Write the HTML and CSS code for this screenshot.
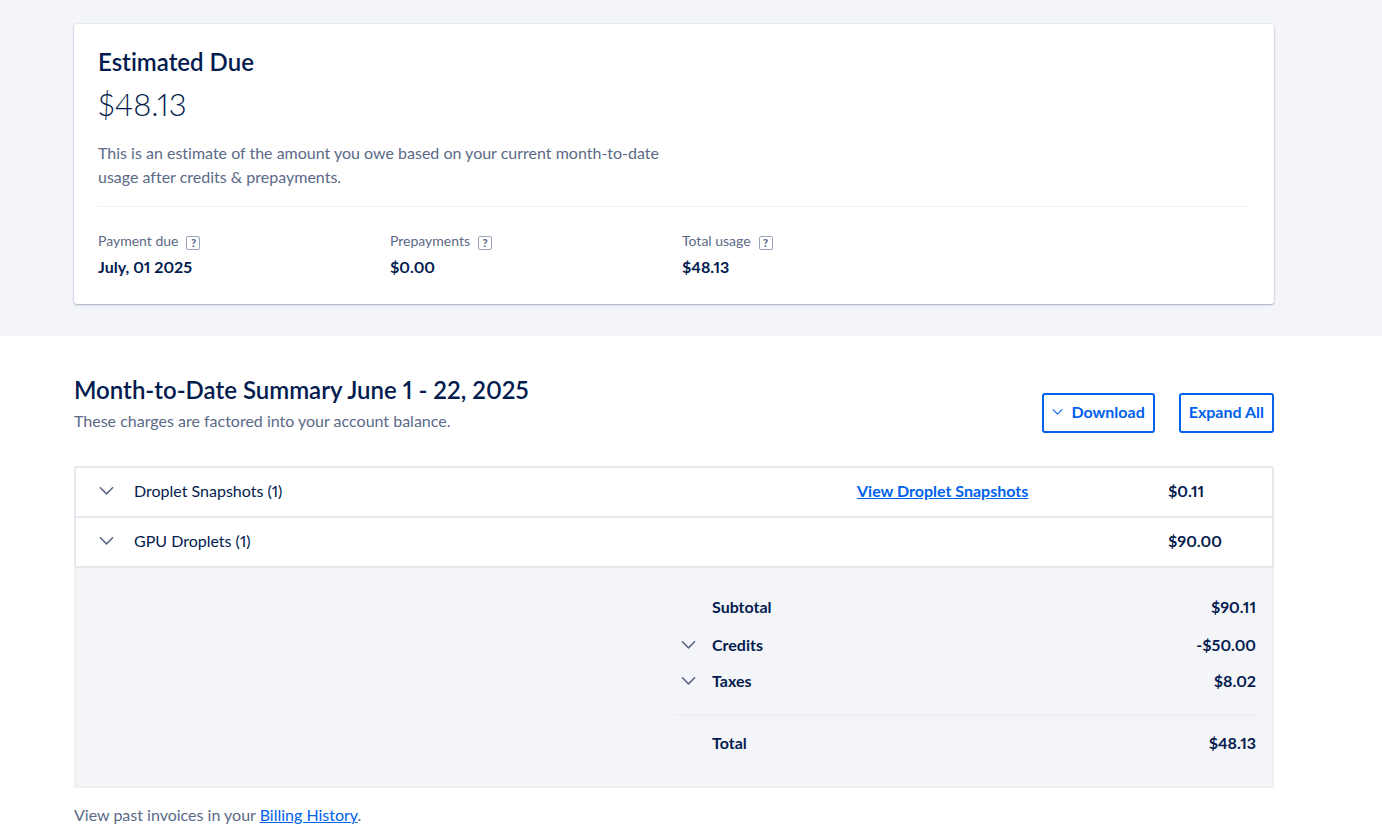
FILE: index.html
```html
<!DOCTYPE html>
<html lang="en">
<head>
<meta charset="utf-8">
<meta name="viewport" content="width=device-width, initial-scale=1">
<title>Billing</title>
<link rel="stylesheet" href="styles.css">
</head>
<body>
<svg class="sprite" aria-hidden="true">
  <symbol id="chevron" viewBox="0 0 16 10"><path d="M1.500 1.500 8 8l6.500-6.500" fill="none" stroke="currentColor" stroke-linecap="round" stroke-linejoin="round"/></symbol>
</svg>
<section class="hero">
  <div class="container">
    <div class="card">
      <h2 class="title">Estimated Due</h2>
      <p class="amount">$48.13</p>
      <p class="note">This is an estimate of the amount you owe based on your current month-to-date usage after credits &amp; prepayments.</p>
      <dl class="stats">
        <div class="stat"><dt>Payment due <button class="help" type="button" aria-label="About payment due">?</button></dt><dd>July, 01 2025</dd></div>
        <div class="stat"><dt>Prepayments <button class="help" type="button" aria-label="About prepayments">?</button></dt><dd>$0.00</dd></div>
        <div class="stat"><dt>Total usage <button class="help" type="button" aria-label="About total usage">?</button></dt><dd>$48.13</dd></div>
      </dl>
    </div>
  </div>
</section>
<main class="container">
  <header class="summary-head">
    <div>
      <h2 class="title">Month-to-Date Summary June 1 - 22, 2025</h2>
      <p class="subtitle">These charges are factored into your account balance.</p>
    </div>
    <div class="actions">
      <button class="btn" type="button"><svg class="icon-small"><use href="#chevron"/></svg>Download</button>
      <button class="btn" type="button">Expand All</button>
    </div>
  </header>
  <div class="charges">
    <table class="charge-table">
      <tr>
        <td class="cell-name"><button class="row-toggle" type="button"><svg class="icon"><use href="#chevron"/></svg>Droplet Snapshots (1)</button></td>
        <td class="cell-link"><a href="#">View Droplet Snapshots</a></td>
        <td class="cell-price">$0.11</td>
      </tr>
      <tr>
        <td class="cell-name"><button class="row-toggle" type="button"><svg class="icon"><use href="#chevron"/></svg>GPU Droplets (1)</button></td>
        <td class="cell-link"></td>
        <td class="cell-price">$90.00</td>
      </tr>
    </table>
  </div>
  <div class="totals">
    <table class="totals-table">
      <tr class="row-subtotal"><th>Subtotal</th><td>$90.11</td></tr>
      <tr><th><button class="total-toggle" type="button"><svg class="icon"><use href="#chevron"/></svg>Credits</button></th><td>-$50.00</td></tr>
      <tr><th><button class="total-toggle" type="button"><svg class="icon"><use href="#chevron"/></svg>Taxes</button></th><td>$8.02</td></tr>
      <tr class="row-gap"><td colspan="2"></td></tr>
      <tr class="row-total"><th>Total</th><td>$48.13</td></tr>
    </table>
  </div>
  <p class="history">View past invoices in your <a href="#">Billing History</a>.</p>
</main>
</body>
</html>
```
FILE: styles.css
```css
* { box-sizing: border-box; }
body {
  margin: 0;
  background: #fff;
  color: #5b6987;
  font: 16px/24px Lato, "Open Sans", sans-serif;
  font-variant-ligatures: none;
  font-variant-numeric: proportional-nums;
}
h2, p, dl, dd { margin: 0; }
button {
  font: inherit;
  font-variant-ligatures: none;
  font-variant-numeric: proportional-nums;
  color: #031b4e;
  background: none;
  border: 0;
  padding: 0;
  cursor: pointer;
}
a { color: #0061eb; }
.sprite { display: none; }
.container { max-width: 1282px; margin: 0 auto; padding: 0 58px 0 24px; }
.hero { background: #f3f5f9; padding: 24px 0 32px; }
.card {
  background: #fff;
  border-radius: 3px;
  padding: 22px 25px 24px 24px;
  box-shadow: 0 1px 2px rgba(3, 27, 78, .3), 0 0 2px rgba(3, 27, 78, .12);
}
.title { color: #031b4e; font-size: 24px; line-height: 32px; font-weight: 600; }
.amount { color: #031b4e; font-size: 31px; line-height: 38px; font-weight: 300; margin-top: 7px; }
.note { max-width: 576px; margin: 18px 0 17px; }
.stats { display: flex; border-top: 1px solid #f0f0f0; padding-top: 23px; }
.stat { width: 292px; }
.stat dt { display: flex; align-items: center; gap: 8px; font-size: 14px; line-height: 22px; }
.stat dd { color: #031b4e; font-weight: 700; margin-top: 3px; padding-bottom: 1px; line-height: 24px; }
.help {
  width: 14px;
  height: 14px;
  margin-top: 4px;
  border: 1px solid #99a3b9;
  border-radius: 2px;
  color: #5b6987;
  font-size: 11px;
  line-height: 12px;
  font-weight: 900;
}
.summary-head { display: flex; justify-content: space-between; padding: 38px 0 33px; }
.subtitle { margin-top: 3px; }
.actions { display: flex; gap: 24px; align-items: flex-end; }
.btn {
  display: flex;
  align-items: center;
  gap: 8px;
  height: 40px;
  padding: 0 8px 2px;
  border: 2px solid #0061eb;
  border-radius: 3px;
  color: #0061eb;
  font-weight: 700;
}
.icon { width: 15px; height: 10px; stroke-width: 1.7; color: #5b6987; flex: none; }
.icon-small { width: 11px; height: 8px; stroke-width: 1.5; }
.charges { border: 2px solid #e5e8ed; border-radius: 3px 3px 2px 2px; }
.charge-table, .totals-table { width: 100%; border-collapse: collapse; }
.charge-table td { height: 49px; padding: 0 0 2px; color: #031b4e; }
.charge-table tr + tr td { border-top: 2px solid #e5e8ed; }
.charge-table .cell-link { width: 311px; font-weight: 700; }
.charge-table .cell-price { width: 104px; font-weight: 700; }
.row-toggle { display: flex; align-items: center; gap: 20px; padding-left: 23px; }
.totals {
  display: flex;
  justify-content: flex-end;
  background: #f3f5f9;
  border: 2px solid #f0f0f1;
  border-top: 0;
  padding: 21px 16px 31px;
}
.totals-table { width: 50%; color: #031b4e; font-weight: 700; }
.totals-table th, .totals-table td { height: 36px; padding: 0; text-align: left; }
.totals-table th { padding-left: 38px; }
.totals-table td { text-align: right; }
.totals-table .row-subtotal > * { height: 38px; padding-bottom: 2px; }
.totals-table .row-gap td { height: 16px; border-bottom: 2px solid #f0f0f1; }
.totals-table .row-total > * { height: 40px; padding-top: 14px; }
.total-toggle { display: flex; align-items: center; gap: 16px; margin-left: -31px; font-weight: 700; }
.history { padding: 15px 0 0; }
```
